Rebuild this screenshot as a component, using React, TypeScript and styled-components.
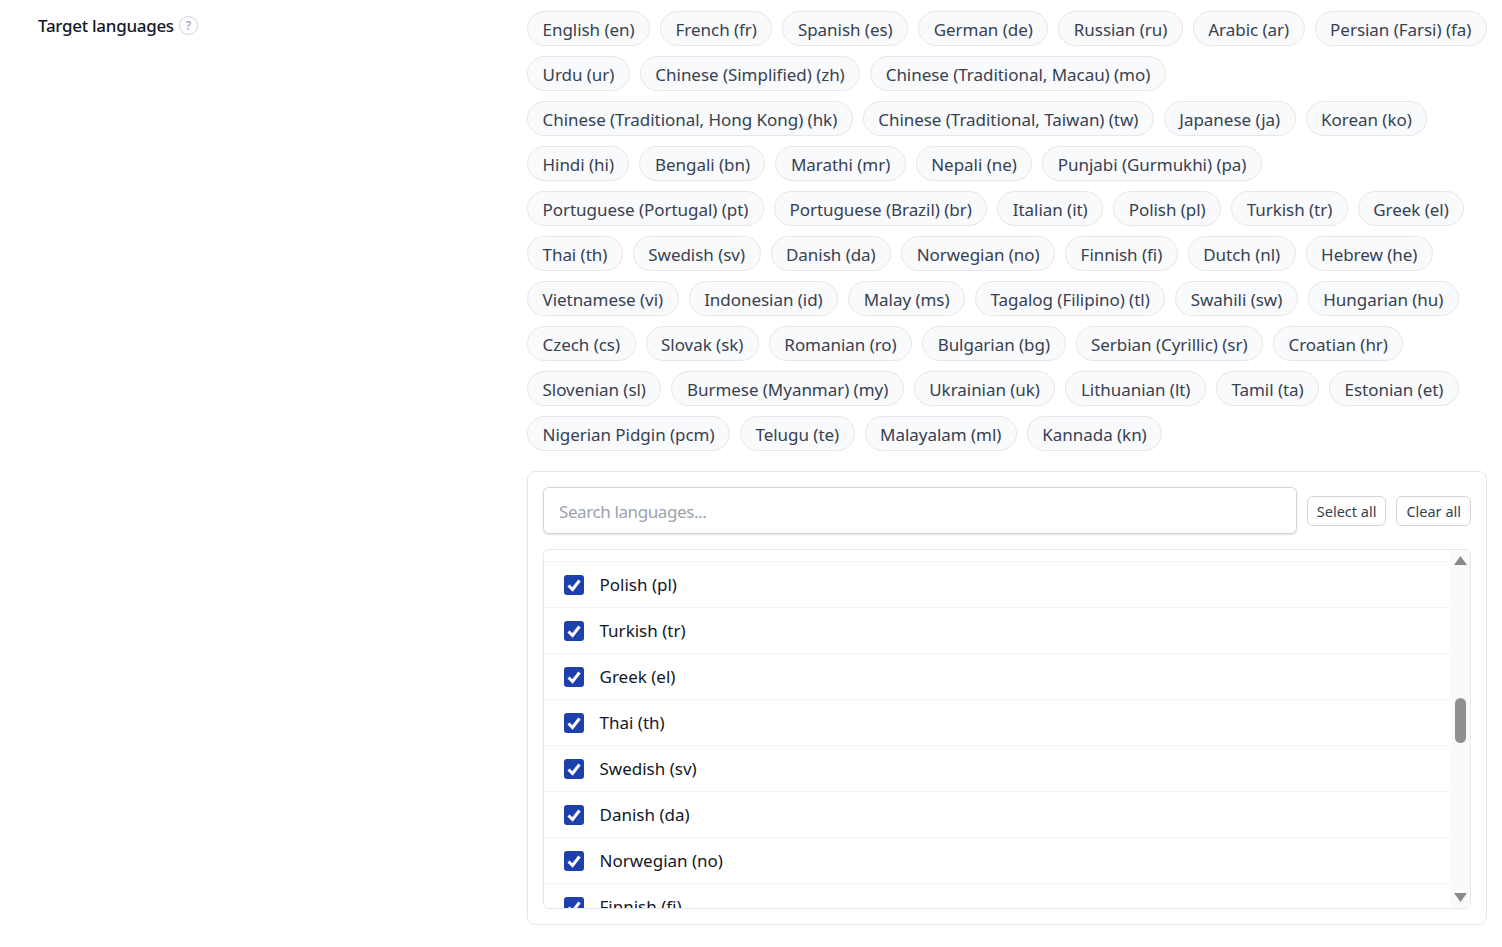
import React, { FC } from 'react'
import styled, { createGlobalStyle } from 'styled-components'

const GlobalStyle = createGlobalStyle`
  html, body {
    margin: 0;
    padding: 0;
    background: #fff;
  }
  body {
    font-family: "Noto Sans", "Open Sans", Arial, sans-serif;
  }
`

const Page = styled.div`
  display: grid;
  grid-template-columns: 527px 960px;
  height: 947px;
  overflow: hidden;
`

const Label = styled.div`
  display: flex;
  align-items: center;
  gap: 5px;
  padding: 15px 0 0 38px;
  height: 21px;
  font-size: 17px;
  font-weight: 500;
  letter-spacing: -0.3px;
  color: #111827;
`

const Help = styled.span`
  display: flex;
  align-items: center;
  justify-content: center;
  width: 17px;
  height: 17px;
  border: 1.5px solid #d1d5db;
  border-radius: 50%;
  font-size: 12px;
  color: #9ca3af;
`

const Content = styled.div`
  padding-top: 11px;
`

const Chips = styled.div`
  display: flex;
  flex-wrap: wrap;
  gap: 10px;
`

const Chip = styled.span`
  box-sizing: border-box;
  height: 35px;
  line-height: 35px;
  padding: 0 14.5px;
  border: 1px solid #e5e7eb;
  border-radius: 18px;
  background: #f9fafb;
  font-size: 17px;
  letter-spacing: -0.04px;
  color: #374151;
  white-space: nowrap;
`

const Card = styled.div`
  box-sizing: border-box;
  height: 454px;
  margin-top: 20px;
  padding: 15px;
  border: 1px solid #e5e7eb;
  border-radius: 8px;
`

const Toolbar = styled.div`
  display: flex;
  align-items: center;
  gap: 10px;
  margin-bottom: 15px;
`

const Search = styled.input`
  box-sizing: border-box;
  flex: 1;
  min-width: 0;
  height: 47px;
  padding: 2px 15px 0;
  border: 1px solid #d1d5db;
  border-radius: 6px;
  box-shadow: 0 1px 2px rgba(0, 0, 0, 0.12);
  font-family: inherit;
  font-size: 17px;
  letter-spacing: -0.4px;
  color: #111827;
  outline: none;
  &::placeholder {
    color: #9ca3af;
    opacity: 1;
  }
`

const SmallButton = styled.button`
  box-sizing: border-box;
  height: 30px;
  padding: 0 9px;
  border: 1px solid #d1d5db;
  border-radius: 6px;
  background: #fff;
  font-family: inherit;
  font-size: 14.5px;
  color: #374151;
  white-space: nowrap;
`

const ListBox = styled.div`
  box-sizing: border-box;
  display: flex;
  height: 360px;
  border: 1px solid #e5e7eb;
  border-radius: 6px;
  overflow: hidden;
`

const Rows = styled.div`
  flex: 1;
  min-width: 0;
  overflow: hidden;
`

const ScrolledOff = styled.div`
  height: 11px;
  border-bottom: 1px solid #f3f4f6;
`

const Row = styled.label`
  box-sizing: border-box;
  display: flex;
  align-items: center;
  gap: 15.5px;
  height: 46px;
  padding-left: 20px;
  border-bottom: 1px solid #f3f4f6;
  font-size: 17px;
  color: #111827;
`

const Box = styled.span`
  display: flex;
  align-items: center;
  justify-content: center;
  width: 20px;
  height: 20px;
  border-radius: 3px;
  background: #1e40af;
`

const Track = styled.div`
  box-sizing: border-box;
  display: flex;
  flex-direction: column;
  align-items: center;
  width: 19px;
  padding-right: 1px;
  background: #fafafa;
`

const Arrow = styled.svg`
  display: block;
  width: 13px;
  height: 9px;
  fill: #8a8a8a;
`

const UpArrow = styled(Arrow)`
  margin-top: 6px;
`

const DownArrow = styled(Arrow)`
  margin-top: auto;
  margin-bottom: 6px;
`

const Thumb = styled.div`
  width: 11px;
  height: 45px;
  margin-top: 133px;
  border-radius: 6px;
  background: #8f8f8f;
`

const languages = [
  'English (en)', 'French (fr)', 'Spanish (es)', 'German (de)', 'Russian (ru)', 'Arabic (ar)', 'Persian (Farsi) (fa)',
  'Urdu (ur)', 'Chinese (Simplified) (zh)', 'Chinese (Traditional, Macau) (mo)',
  'Chinese (Traditional, Hong Kong) (hk)', 'Chinese (Traditional, Taiwan) (tw)', 'Japanese (ja)', 'Korean (ko)',
  'Hindi (hi)', 'Bengali (bn)', 'Marathi (mr)', 'Nepali (ne)', 'Punjabi (Gurmukhi) (pa)',
  'Portuguese (Portugal) (pt)', 'Portuguese (Brazil) (br)', 'Italian (it)', 'Polish (pl)', 'Turkish (tr)', 'Greek (el)',
  'Thai (th)', 'Swedish (sv)', 'Danish (da)', 'Norwegian (no)', 'Finnish (fi)', 'Dutch (nl)', 'Hebrew (he)',
  'Vietnamese (vi)', 'Indonesian (id)', 'Malay (ms)', 'Tagalog (Filipino) (tl)', 'Swahili (sw)', 'Hungarian (hu)',
  'Czech (cs)', 'Slovak (sk)', 'Romanian (ro)', 'Bulgarian (bg)', 'Serbian (Cyrillic) (sr)', 'Croatian (hr)',
  'Slovenian (sl)', 'Burmese (Myanmar) (my)', 'Ukrainian (uk)', 'Lithuanian (lt)', 'Tamil (ta)', 'Estonian (et)',
  'Nigerian Pidgin (pcm)', 'Telugu (te)', 'Malayalam (ml)', 'Kannada (kn)',
]

const visible = ['Polish (pl)', 'Turkish (tr)', 'Greek (el)', 'Thai (th)', 'Swedish (sv)', 'Danish (da)', 'Norwegian (no)', 'Finnish (fi)']

const App: FC = () => {
  return (
    <Page>
      <GlobalStyle />
      <Label>
        Target languages
        <Help>?</Help>
      </Label>
      <Content>
        <Chips>
          {languages.map((name) => <Chip key={name}>{name}</Chip>)}
        </Chips>
        <Card>
          <Toolbar>
            <Search placeholder="Search languages..." />
            <SmallButton>Select all</SmallButton>
            <SmallButton>Clear all</SmallButton>
          </Toolbar>
          <ListBox>
            <Rows>
              <ScrolledOff />
              {visible.map((name) => (
                <Row key={name}>
                  <Box>
                    <svg width="16" height="16" viewBox="0 0 16 16" fill="none" stroke="#fff" strokeWidth="3">
                      <path d="M2.5 8.5 6.5 12.5 13.5 3.5" />
                    </svg>
                  </Box>
                  {name}
                </Row>
              ))}
            </Rows>
            <Track>
              <UpArrow viewBox="0 0 13 9"><path d="M6.5 0 13 9H0z" /></UpArrow>
              <Thumb />
              <DownArrow viewBox="0 0 13 9"><path d="M0 0h13L6.5 9z" /></DownArrow>
            </Track>
          </ListBox>
        </Card>
      </Content>
    </Page>
  )
}

export default App
